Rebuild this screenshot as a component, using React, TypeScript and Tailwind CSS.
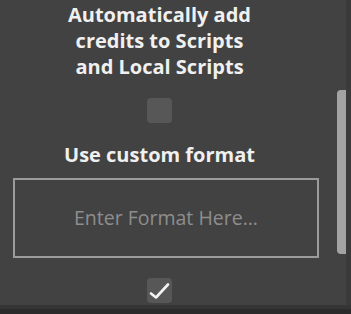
import React from "react";

const FONT = { fontFamily: "'Open Sans', Lato, sans-serif" };

function Check({ on }: { on?: boolean }) {
  return (
    <div className="flex h-[25px] w-[25px] items-center justify-center rounded-[4px] bg-[#575757]">
      {on && (
        <svg width="25" height="25" viewBox="0 0 25 25" fill="none">
          <path d="M4 15.5 L9 19.5 L21 6.5" stroke="#f2f2f2" strokeWidth="2.6" strokeLinecap="round" strokeLinejoin="round" />
        </svg>
      )}
    </div>
  );
}

export default function App() {
  return (
    <div className="flex h-[314px] w-[351px] flex-col bg-[#424242]" style={FONT}>
      <div className="flex flex-1 min-h-0">
        {/* Einstellingen */}
        <div className="flex w-[337px] flex-col pt-[2px]">
          <div className="w-[319px] text-center text-[20px] font-bold leading-[26px] text-[#f0f0f0]">
            Automatically add<br />credits to Scripts<br />and Local Scripts
          </div>
          <div className="mt-[18px] flex w-[319px] justify-center">
            <Check />
          </div>
          <div className="mt-[19px] w-[319px] text-center text-[20px] font-bold leading-[26px] text-[#f0f0f0]">
            Use custom format
          </div>
          <div className="ml-[13px] mt-[10px] flex h-[80px] w-[306px] items-center justify-center border-2 border-[#9b9b9b] text-[19.5px] text-[#8e8e8e]">
            Enter Format Here...
          </div>
          <div className="mt-[20px] flex w-[319px] justify-center">
            <Check on />
          </div>
        </div>
        {/* Scrollbalk */}
        <div className="flex flex-1">
          <div className="flex w-[9px] flex-col pt-[90px]">
            <div className="h-[164px] rounded-l-[4px] bg-[#a3a3a3]" />
          </div>
          <div className="flex-1 bg-[#3a3a3a]" />
        </div>
      </div>
      <div className="h-[4px] bg-[#353535]" />
      <div className="h-[5px] bg-[#2b2b2b]" />
    </div>
  );
}
